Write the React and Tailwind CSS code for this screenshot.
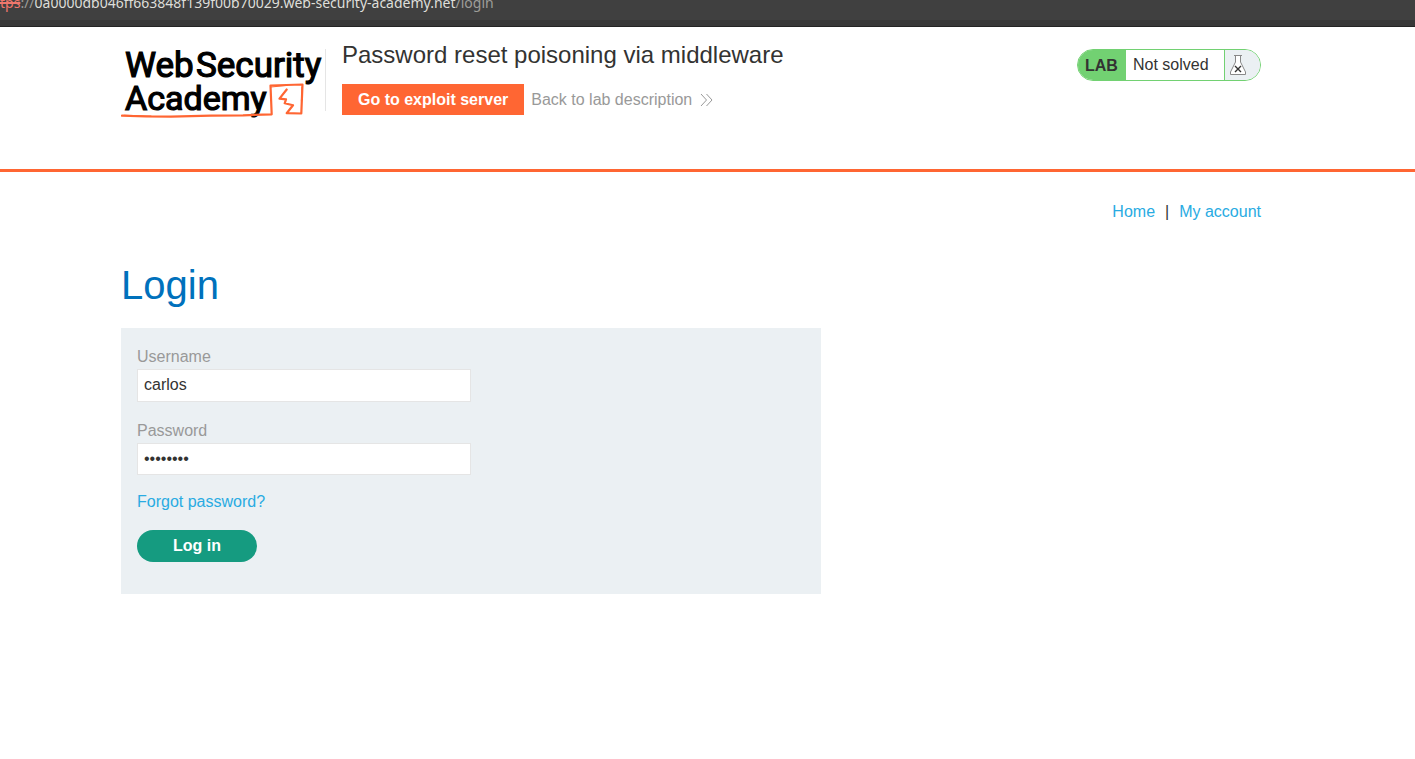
function AddressBar() {
  return (
    <div className="flex h-[27px] flex-col border-b border-[#242424] bg-[#404040]">
      <div className="flex h-5 shrink-0 items-end overflow-hidden whitespace-nowrap font-['Noto_Sans',sans-serif] text-sm leading-[35px] text-[#9d9d99]">
        <span className="text-[#f0776c] line-through decoration-2">tps</span>
        <span>://</span>
        <span className="text-[#deded9]">0a0000db046ff663848f139f00b70029.web-security-academy.net</span>
        <span>/login</span>
      </div>
      <div className="flex-1 bg-[#383838]" />
    </div>
  );
}

function Logo() {
  return (
    <svg viewBox="0 0 204 76" className="h-[76px] w-[204px] shrink-0" role="img" aria-label="Web Security Academy">
      <g fill="#000" stroke="#000" strokeWidth="1.2" className="font-['Roboto',sans-serif] font-normal">
        <text x="4" y="34" className="text-[35px]">Web</text>
        <text x="75" y="34" className="text-[35px]">Security</text>
        <text x="4" y="67" className="text-[34px]">Academy</text>
      </g>
      <g fill="none" stroke="#ff6633" strokeLinejoin="round" strokeLinecap="round">
        <path d="M1 72.600 L25 73.500 L50 73.600 L90 72.600 L122 72.300 L150.700 71.300 L149.500 42.500 L181.500 41.500 L180.300 70.500 L165.700 70.200 L172 62.200 L163.700 60.300 L165 56.400 L158.500 55.600 L165.700 46.500" strokeWidth="2.200" />
        <path d="M3 72.300 L30 73 M150 44 L165 42.500 M181 44 L180.500 58" strokeWidth="1.200" />
      </g>
    </svg>
  );
}

function LabStatus() {
  return (
    <div className="flex h-8 overflow-hidden rounded-2xl border border-[#72d172] bg-white text-base leading-[30px]">
      <span className="w-12 bg-[#72d172] pl-[7px] font-bold leading-8">LAB</span>
      <span className="w-[98px] pl-[7px]">Not solved</span>
      <span className="flex w-9 items-center border-l border-[#72d172] bg-[#ebf0f3] pl-1">
        <svg viewBox="0 0 18 22" className="h-[22px] w-[18px]" fill="none" aria-hidden="true">
          <path d="M6.500 1.500 V8 L1.500 18 V20.500 H16.500 V18 L11.500 8 V1.500 Z" fill="#fff" stroke="#888" />
          <path d="M5 1.500 H13" stroke="#888" />
          <path d="M6 12 L12 18 M12 12 L6 18" stroke="#333" strokeWidth="1.400" />
        </svg>
      </span>
    </div>
  );
}

export default function App() {
  return (
    <div className="min-h-screen bg-white font-['Liberation_Sans',Arial,sans-serif] text-base text-[#333332]">
      <AddressBar />
      <header className="border-b-[3px] border-[#ff6633] pb-[50px] pt-4">
        <div className="ml-[121px] flex w-full max-w-[1140px] items-start">
          <Logo />
          <div className="mt-1.5 h-[62px] border-l border-[#e5e5e5]" />
          <div className="ml-4 flex-1">
            <h2 className="text-2xl leading-6">Password reset poisoning via middleware</h2>
            <div className="mt-[17px] flex items-center gap-[7px]">
              <a href="#exploit" className="bg-[#ff6633] px-4 font-bold leading-[31px] text-white">Go to exploit server</a>
              <a href="#lab" className="flex items-center gap-2 text-[#999]">
                Back to lab description
                <svg viewBox="0 0 13 14" className="h-3.5 w-[13px]" fill="none" stroke="#999" aria-hidden="true">
                  <path d="M1 1 L6.500 7 L1 13 M6.500 1 L12 7 L6.500 13" />
                </svg>
              </a>
            </div>
          </div>
          <div className="mt-1.5"><LabStatus /></div>
        </div>
      </header>
      <main className="ml-[121px] max-w-[1140px] pt-7">
        <nav className="flex justify-end gap-2.5 leading-6">
          <a href="#home" className="text-[#29abe2]">Home</a>
          <span>|</span>
          <a href="#account" className="text-[#29abe2]">My account</a>
        </nav>
        <h1 className="mt-9 text-[40px] leading-[50px] text-[#0071bc]">Login</h1>
        <form className="mt-[18px] flex max-w-[700px] flex-col items-start bg-[#ebf0f3] px-4 pb-8 pt-4" onSubmit={(e) => e.preventDefault()}>
          <label htmlFor="username" className="leading-[25px] text-[#999]">Username</label>
          <input id="username" type="text" defaultValue="carlos" className="h-[33px] w-full max-w-[334px] border border-[#e5e5e5] bg-white px-1.5 pb-0.5 outline-none" />
          <label htmlFor="password" className="mt-4 leading-[25px] text-[#999]">Password</label>
          <input id="password" type="password" defaultValue="password" className="h-8 w-full max-w-[334px] border border-[#e5e5e5] bg-white px-1.5 outline-none" />
          <a href="#forgot" className="mt-3.5 leading-[25px] text-[#29abe2]">Forgot password?</a>
          <button type="submit" className="mt-4 h-8 w-[120px] rounded-full bg-[#159b80] font-bold text-white">Log in</button>
        </form>
      </main>
    </div>
  );
}
